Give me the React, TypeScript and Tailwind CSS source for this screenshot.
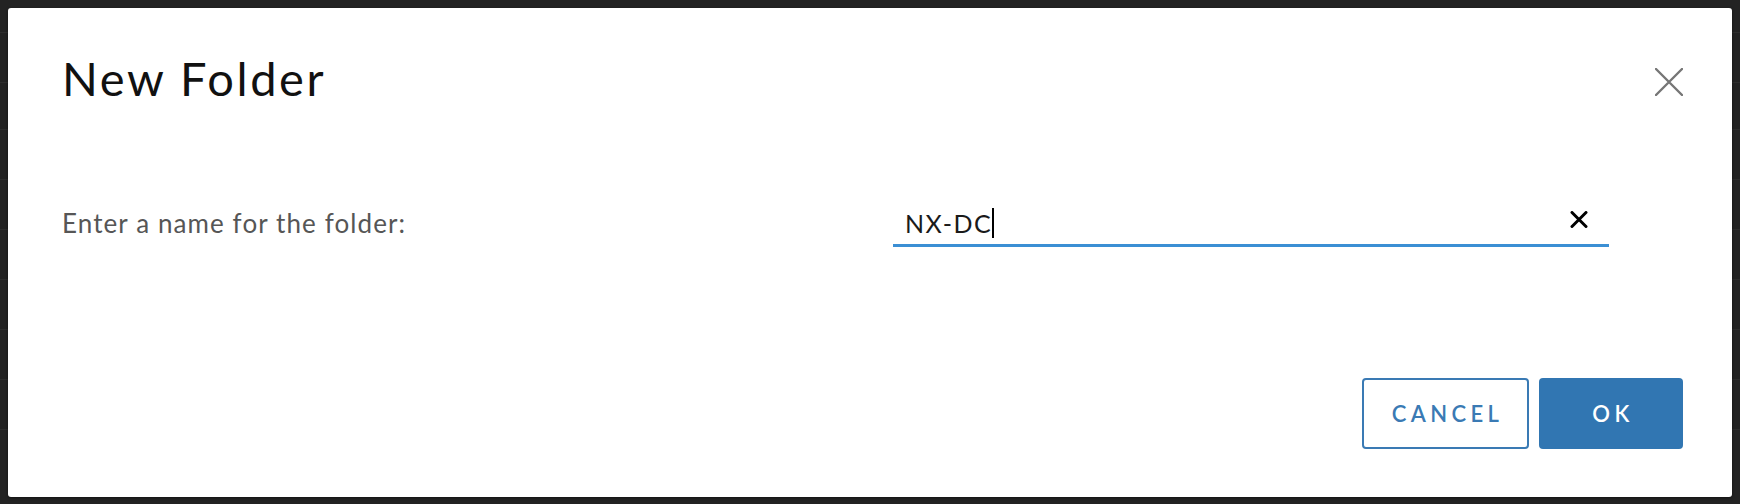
const rowLines = [33, 83, 130, 180, 230, 280, 330, 380, 430];

function CloseIcon() {
  return (
    <svg width="28" height="28" viewBox="0 0 28 28" fill="none">
      <path d="M1 1L27 27M27 1L1 27" stroke="#767676" strokeWidth="2.4" strokeLinecap="round" />
    </svg>
  );
}

function ClearIcon() {
  return (
    <svg width="18" height="17" viewBox="0 0 18 17" fill="none">
      <path d="M2 1.5L16 15.5M16 1.5L2 15.5" stroke="#000" strokeWidth="3" strokeLinecap="round" />
    </svg>
  );
}

export default function App() {
  return (
    <div className="relative h-[504px] w-[1740px] overflow-hidden bg-[#232323] font-['Lato',sans-serif]">
      {/* dimmed page behind the modal */}
      <div className="flex flex-col">
        {rowLines.map((y, i) => (
          <div
            key={y}
            className="border-b border-[#2e2e2e]"
            style={{ height: i === 0 ? y : y - rowLines[i - 1] }}
          />
        ))}
      </div>

      <div className="absolute left-[8px] top-[8px] flex h-[489px] w-[1724px] flex-col rounded-[3px] bg-white pb-[48px] pl-[54px] pr-[49px] pt-[42px] shadow-[0_1px_3px_rgba(0,0,0,0.5)]">
        <div className="flex items-start justify-between">
          <h1 className="text-[47px] font-normal leading-[56px] tracking-[2.6px] text-[#111]">New Folder</h1>
          <button className="mt-[18px] flex h-[28px] w-[28px] items-center justify-center">
            <CloseIcon />
          </button>
        </div>

        <div className="mt-[102px] flex items-start">
          <label className="w-[831px] text-[26px] leading-[30px] tracking-[1.1px] text-[#565656]">
            Enter a name for the folder:
          </label>
          <div className="flex w-[716px] items-start border-b-[3px] border-[#3b8fd4] pb-[6px] pl-[12px] pr-[21px]">
            <div className="flex flex-1 items-center text-[25px] leading-[30px] tracking-[1.5px] text-[#1a1a1a]">
              <span>NX-DC</span>
              <span className="inline-block h-[30px] w-[2px] bg-black" />
            </div>
            <button className="mt-[3px] flex h-[17px] w-[18px] items-center justify-center">
              <ClearIcon />
            </button>
          </div>
        </div>

        <div className="mt-auto flex justify-end gap-[10px]">
          <button className="flex h-[71px] w-[167px] items-center justify-center rounded-[4px] border-2 border-[#3a7ab4] bg-white pl-[4px] text-[22px] font-semibold tracking-[0.2em] text-[#3a7ab4]">
            CANCEL
          </button>
          <button className="flex h-[71px] w-[144px] items-center justify-center rounded-[4px] bg-[#3176b2] pl-[4px] text-[22px] font-semibold tracking-[0.2em] text-white">
            OK
          </button>
        </div>
      </div>
    </div>
  );
}
